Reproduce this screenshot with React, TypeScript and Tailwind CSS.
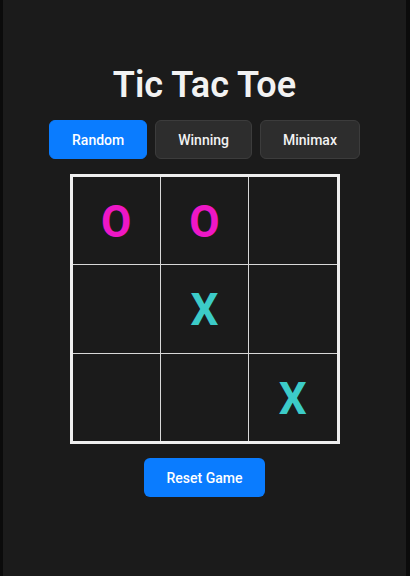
import React from "react";

const board: (string | null)[] = ["O", "O", null, null, "X", null, null, null, "X"];

export default function App() {
  return (
    <div className="w-full h-[576px] bg-[#0b0b0b] flex" style={{ fontFamily: "Roboto, 'Noto Sans', sans-serif" }}>
      <div className="ml-[3px] w-[403px] h-full bg-[#1b1b1b] flex flex-col items-center pt-[65px]">
        <h1 className="text-[36px] leading-[40px] font-semibold text-[#f2f2f2]">Tic Tac Toe</h1>
        <div className="mt-[15px] flex gap-2">
          <button className="px-[22px] pt-[11px] pb-[9px] leading-[17px] text-[14px] font-medium rounded-md border border-[#0a7cff] bg-[#0a7cff] text-white">
            Random
          </button>
          <button className="px-[22px] pt-[11px] pb-[9px] leading-[17px] text-[14px] font-medium rounded-md border border-[#3c3c3c] bg-[#2d2d2d] text-[#f2f2f2]">
            Winning
          </button>
          <button className="px-[22px] pt-[11px] pb-[9px] leading-[17px] text-[14px] font-medium rounded-md border border-[#3c3c3c] bg-[#2d2d2d] text-[#f2f2f2]">
            Minimax
          </button>
        </div>
        <div className="mt-[15px] w-[270px] h-[270px] border-[3px] border-[#efefef] bg-[#d8d8d8] grid grid-cols-3 grid-rows-3 gap-px">
          {board.map((v, i) => (
            <div key={i} className="bg-[#1b1b1b] flex items-center justify-center pt-[3px]">
              {v && (
                <span
                  className={
                    "text-[44px] leading-none font-bold " + (v === "O" ? "text-[#ee17c6]" : "text-[#3ccbc8]")
                  }
                >
                  {v}
                </span>
              )}
            </div>
          ))}
        </div>
        <button className="mt-[14px] w-[121px] h-[39px] pt-[2px] rounded-md bg-[#0a7cff] text-white text-[14px] font-medium">
          Reset Game
        </button>
      </div>
    </div>
  );
}
